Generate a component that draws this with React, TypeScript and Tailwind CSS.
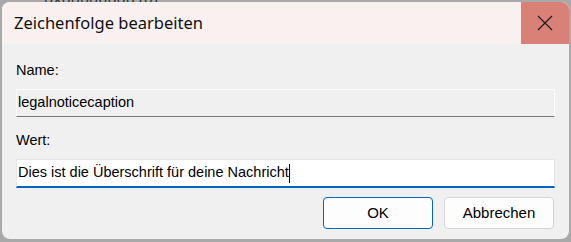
export default function App() {
  return (
    <div className="relative w-[571px] h-[242px] overflow-hidden bg-[#a9a9a9] pt-[2px] pl-[2px] pr-[2px] pb-[3px] font-['Liberation_Sans',Arial,sans-serif]">
      <span className="absolute left-[44px] top-[-14px] text-[16px] text-[#333] font-['Noto_Sans',sans-serif]">0x00000000 (0)</span>
      <div className="relative h-full rounded-[8px] overflow-hidden bg-[#f0f0f0] flex flex-col">
        <div className="h-[42px] bg-[#f9f0f0] flex items-center justify-between shrink-0">
          <span className="pl-[12px] text-[16.5px] text-[#111] font-['Noto_Sans',sans-serif]">Zeichenfolge bearbeiten</span>
          <div className="w-[48px] h-full bg-[#d98077] flex items-center justify-center">
            <svg width="16" height="16" viewBox="0 0 16 16">
              <path d="M1 1 L15 15 M15 1 L1 15" stroke="#1a1a1a" strokeWidth="1.2" fill="none" />
            </svg>
          </div>
        </div>
        <div className="px-[14px] flex flex-col">
          <div className="mt-[18px] text-[14.5px] leading-[17px] text-[#000]">Name:</div>
          <div className="mt-[10px] h-[28px] bg-[#f0f0f0] border border-[#fbfbfb] border-b-[#7a7a7a] flex items-center px-[1px] text-[14.5px] text-[#000]">
            legalnoticecaption
          </div>
          <div className="mt-[15px] text-[14.5px] leading-[17px] text-[#000]">Wert:</div>
          <div className="mt-[10px] h-[29px] bg-white border border-[#e6e6e6] border-b-2 border-b-[#0067c0] flex items-center px-[1px] text-[14.5px] text-[#000]">
            <span>Dies ist die Überschrift für deine Nachricht</span>
            <span className="w-[1px] h-[19px] bg-black"></span>
          </div>
          <div className="mt-[9px] flex justify-end gap-[11px] pr-[1px]">
            <button className="w-[110px] h-[32px] rounded-[4px] bg-[#fdfdfd] border border-[#0067c0] text-[15px] text-[#000]">OK</button>
            <button className="w-[110px] h-[32px] rounded-[4px] bg-[#fdfdfd] border border-[#d5d5d5] text-[15px] text-[#000]">Abbrechen</button>
          </div>
        </div>
      </div>
    </div>
  );
}
